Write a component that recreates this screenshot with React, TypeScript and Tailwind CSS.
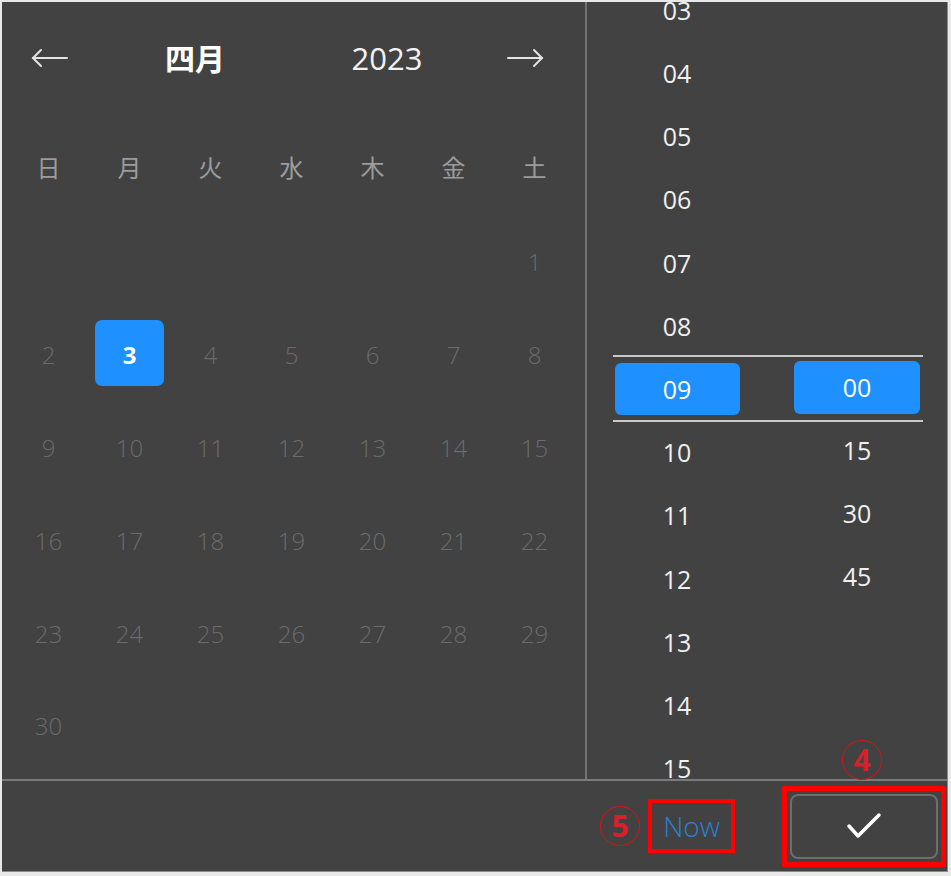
const WEEKDAYS = ['日', '月', '火', '水', '木', '金', '土'];

const DAYS: (number | null)[] = [
  null, null, null, null, null, null,
  ...Array.from({ length: 30 }, (_, i) => i + 1),
];

const HOURS = ['03', '04', '05', '06', '07', '08', '09', '10', '11', '12', '13', '14', '15'];
const MINUTES = ['00', '15', '30', '45'];

function ArrowIcon({ dir }: { dir: 'left' | 'right' }) {
  return (
    <svg width="38" height="20" viewBox="0 0 38 20" fill="none" stroke="#e4e4e4" strokeWidth="2" strokeLinecap="round">
      {dir === 'left' ? (
        <>
          <path d="M2 10h34" />
          <path d="M10 2 2 10l8 8" />
        </>
      ) : (
        <>
          <path d="M2 10h34" />
          <path d="M28 2l8 8-8 8" />
        </>
      )}
    </svg>
  );
}

function Circled({ n }: { n: string }) {
  return (
    <div className="w-[40px] h-[40px] rounded-full border-[1.5px] border-[#e01010] flex items-center justify-center text-[30px] font-bold text-[#d8202a] leading-none">
      {n}
    </div>
  );
}

export default function App() {
  return (
    <div
      className="w-[951px] h-[876px] bg-[#e9e9e9] pl-[2px] pt-[2px] pr-[3px] pb-[4px]"
      style={{ fontFamily: "'Open Sans', 'Noto Sans CJK JP', sans-serif" }}
    >
      <div className="relative w-full h-full bg-[#424242] border-r border-b border-[#8c8c8c] flex flex-col overflow-hidden">
        {/* ── Main ── */}
        <div className="flex h-[777px]">
          {/* Calendar */}
          <div className="w-[585px] border-r-2 border-[#737373] pl-[6px]">
            <div className="h-[112px] flex items-center w-[567px]">
              <div className="w-[84px] flex justify-center">
                <ArrowIcon dir="left" />
              </div>
              <div className="w-[206px] text-center text-[30px] font-semibold text-white">四月</div>
              <div className="w-[178px] text-center text-[31px] text-[#f2f2f2]">2023</div>
              <div className="w-[98px] flex justify-center">
                <ArrowIcon dir="right" />
              </div>
            </div>
            <div className="grid grid-cols-7 w-[567px] h-[104px] items-center pt-[4px]">
              {WEEKDAYS.map((d) => (
                <div key={d} className="text-center text-[24px] text-[#9c9c9c]">{d}</div>
              ))}
            </div>
            <div className="grid grid-cols-7 w-[567px] auto-rows-[92.8px] -mt-[2px]">
              {DAYS.map((d, i) => (
                <div key={i} className="flex items-center justify-center">
                  {d === 3 ? (
                    <div className="w-[69px] h-[66px] -mt-[4px] rounded-[7px] bg-[#1e90ff] flex items-center justify-center text-[24px] font-bold text-white">
                      <span className="mt-[4px]">3</span>
                    </div>
                  ) : (
                    d !== null && <span className="text-[24px] font-light text-[#6b6b6b]">{d}</span>
                  )}
                </div>
              ))}
            </div>
          </div>

          {/* Time */}
          <div className="relative flex-1 flex overflow-hidden">
            <div className="flex-1 flex flex-col mt-[-23px]">
              {HOURS.map((h) => (
                <div key={h} className="h-[63.2px] shrink-0 flex items-center justify-center">
                  {h === '09' ? (
                    <div className="w-[125px] h-[52px] -mt-[2px] rounded-[6px] bg-[#1e90ff] flex items-center justify-center text-[25px] text-white">
                      <span className="mt-[2px]">{h}</span>
                    </div>
                  ) : (
                    <span className="text-[25px] text-[#f0f0f0]">{h}</span>
                  )}
                </div>
              ))}
            </div>
            <div className="flex-1 flex flex-col pt-[354px]">
              {MINUTES.map((m) => (
                <div key={m} className="h-[63.2px] shrink-0 flex items-center justify-center">
                  {m === '00' ? (
                    <div className="w-[126px] h-[53px] rounded-[6px] bg-[#1e90ff] flex items-center justify-center text-[25px] text-white">
                      {m}
                    </div>
                  ) : (
                    <span className="text-[25px] text-[#f0f0f0]">{m}</span>
                  )}
                </div>
              ))}
            </div>
            {/* selection lines */}
            <div className="absolute left-[26px] right-[24px] top-[353px] h-[2px] bg-[#c9c9c9]" />
            <div className="absolute left-[26px] right-[24px] top-[418px] h-[2px] bg-[#c9c9c9]" />
          </div>
        </div>

        {/* ── Footer ── */}
        <div className="flex-1 border-t-2 border-[#7a7a7a] flex items-center justify-end pr-[1px]">
          <div className="flex items-center mr-[47px]">
            <Circled n="5" />
            <div className="ml-[8px] border-[4px] border-[#ff0000] px-[11px] h-[54px] flex items-center">
              <span className="text-[28px] font-light text-[#2b7fd4]">Now</span>
            </div>
          </div>
          <div className="border-[5px] border-[#ff0000] p-[3px]">
            <div className="w-[148px] h-[65px] rounded-[8px] border-2 border-[#6e6e6e] flex items-center justify-center">
              <svg width="40" height="30" viewBox="0 0 40 30" fill="none" stroke="#ffffff" strokeWidth="3.5" strokeLinecap="round" strokeLinejoin="round">
                <path d="M5 15l9 10L35 4" />
              </svg>
            </div>
          </div>
        </div>

        {/* annotation ④ */}
        <div className="absolute left-[840px] top-[738px]">
          <Circled n="4" />
        </div>
      </div>
    </div>
  );
}
